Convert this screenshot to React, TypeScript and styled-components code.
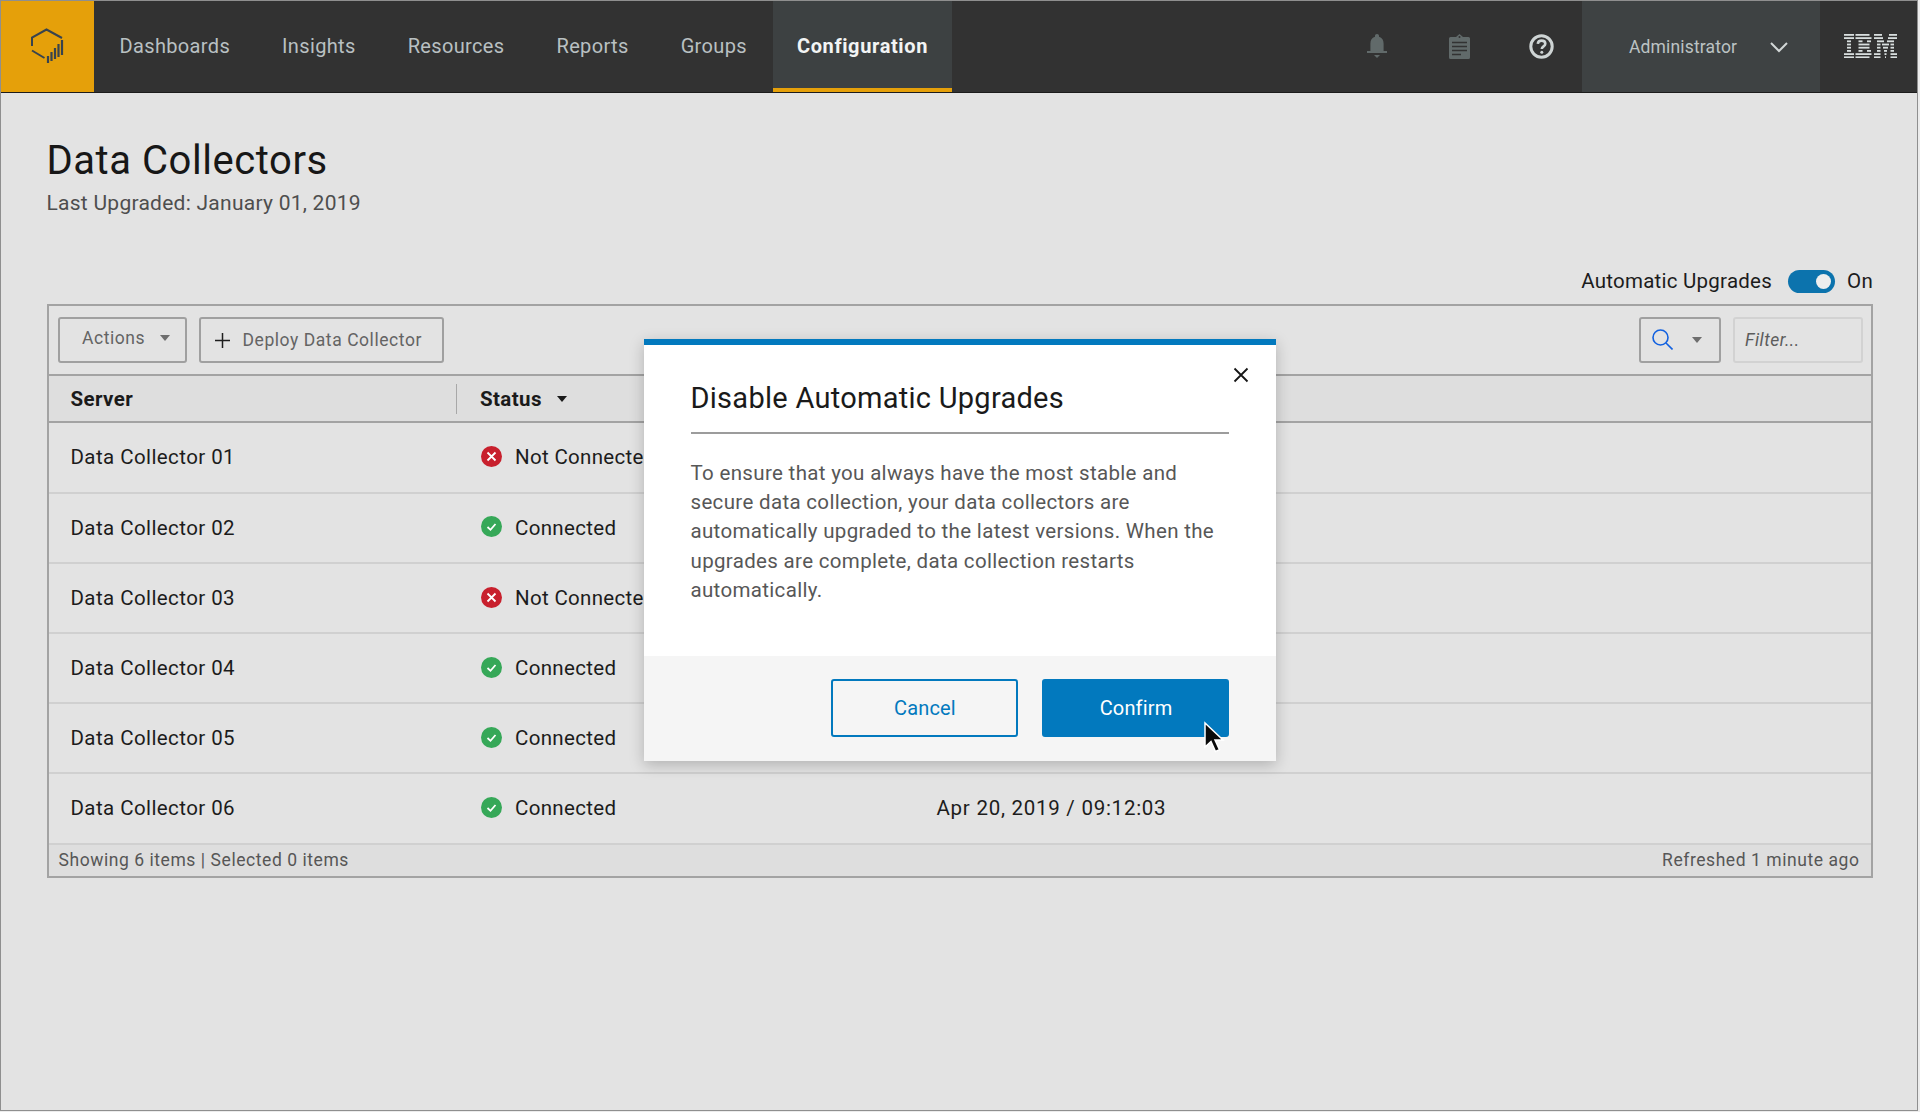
import styled, { createGlobalStyle } from 'styled-components';

const GlobalStyle = createGlobalStyle`
  html, body {
    margin: 0;
    padding: 0;
    background: #ececec;
  }
  body {
    font-family: Roboto, "Noto Sans", sans-serif;
    -webkit-font-smoothing: antialiased;
  }
  * {
    box-sizing: border-box;
  }
`;

const Frame = styled.div`
  position: relative;
  width: 1918px;
  height: 1111px;
  border: 1.5px solid #8f8f8f;
  background: #e3e3e3;
  overflow: hidden;
`;

const Header = styled.header`
  display: flex;
  align-items: stretch;
  height: 91.5px;
  background: #323232;
  border-bottom: 1px solid #1c1c1c;
`;

const LogoTile = styled.div`
  display: flex;
  align-items: center;
  justify-content: center;
  width: 92.5px;
  background: #e5a00a;
`;

const Nav = styled.nav`
  display: flex;
  align-items: stretch;
`;

const NavItem = styled.a<{ $active?: boolean }>`
  display: flex;
  align-items: center;
  padding: ${({ $active }) => ($active ? '0 24px' : '0 26px')};
  font-size: 20px;
  letter-spacing: ${({ $active }) => ($active ? '0.63px' : '0.35px')};
  font-weight: ${({ $active }) => ($active ? 700 : 400)};
  color: ${({ $active }) => ($active ? '#f2f4f4' : '#b9c0c2')};
  background: ${({ $active }) => ($active ? '#3d4142' : 'transparent')};
  border-bottom: 4px solid ${({ $active }) => ($active ? '#e5a00a' : 'transparent')};
  border-top: 4px solid transparent;
`;

const HeaderRight = styled.div`
  display: flex;
  align-items: stretch;
  margin-left: auto;
`;

const IconSlot = styled.div`
  display: flex;
  align-items: center;
  justify-content: center;
  width: 82px;
  padding-top: 1px;
`;

const IconGroup = styled.div`
  display: flex;
`;

const UserMenu = styled.div`
  display: flex;
  align-items: center;
  justify-content: space-between;
  width: 238px;
  padding: 2px 32px 0 47px;
  background: #3e4243;
  font-size: 17.5px;
  letter-spacing: 0.15px;
  color: #bcc3c4;
`;

const IbmSlot = styled.div`
  display: flex;
  align-items: center;
  justify-content: center;
  width: 97px;
  padding-left: 3px;
`;

const Main = styled.main`
  padding: 45px 44px 0 45.5px;
`;

const Title = styled.h1`
  margin: 0;
  font-size: 40px;
  line-height: 46px;
  font-weight: 400;
  letter-spacing: 0.55px;
  color: #171717;
`;

const Subtitle = styled.p`
  margin: 6.5px 0 0;
  font-size: 21px;
  line-height: 26px;
  letter-spacing: 0.26px;
  color: #4e4e4e;
`;

const UpgradeRow = styled.div`
  display: flex;
  align-items: center;
  justify-content: flex-end;
  gap: 16px;
  margin-top: 53px;
  height: 24px;
  font-size: 20.5px;
  letter-spacing: 0.25px;
  color: #1c1c1c;
`;

const OnLabel = styled.span`
  margin-left: -4px;
`;

const Toggle = styled.span`
  display: flex;
  align-items: center;
  justify-content: flex-end;
  width: 47px;
  height: 23px;
  padding-right: 4px;
  border-radius: 12px;
  background: #0c73ad;
`;

const Knob = styled.span`
  width: 15px;
  height: 15px;
  border-radius: 50%;
  background: #eeeeee;
`;

const Table = styled.section`
  margin-top: 10.5px;
  border: 2px solid #a3a3a3;
  width: 1826px;
`;

const Toolbar = styled.div`
  display: flex;
  align-items: center;
  height: 70.2px;
  padding: 0 8.5px 0 9.5px;
  gap: 12px;
  border-bottom: 2px solid #a3a3a3;
`;

const OutlineButton = styled.div`
  display: flex;
  align-items: center;
  height: 46px;
  border: 2px solid #a0a0a0;
  border-radius: 3px;
  font-size: 17.5px;
  letter-spacing: 0.56px;
  color: #646464;
`;

const ActionsButton = styled(OutlineButton)`
  width: 128.5px;
  padding: 0 0 3px 22px;
  gap: 15px;
`;

const DeployButton = styled(OutlineButton)`
  width: 245.5px;
  padding: 1px 0 0 14px;
  gap: 13px;
`;

const SearchButton = styled(OutlineButton)`
  width: 82px;
  margin-left: auto;
  padding-left: 11px;
  gap: 18.5px;
`;

const FilterBox = styled.div`
  display: flex;
  align-items: center;
  width: 130px;
  height: 46px;
  margin-right: -1px;
  padding-left: 10px;
  border: 2px solid #d2d2d2;
  border-radius: 3px;
  font-size: 17.5px;
  font-style: italic;
  letter-spacing: 0.5px;
  color: #5c5c5c;
`;

const Caret = styled.span<{ $dark?: boolean }>`
  display: inline-block;
  width: 0;
  height: 0;
  border-left: 5.5px solid transparent;
  border-right: 5.5px solid transparent;
  border-top: 6px solid ${({ $dark }) => ($dark ? '#1a1a1a' : '#6e6e6e')};
`;

const HeadRow = styled.div`
  display: grid;
  grid-template-columns: 407px 1fr;
  align-items: center;
  height: 47.7px;
  padding-top: 1px;
  background: #dedede;
  border-bottom: 2px solid #a3a3a3;
  font-size: 20.5px;
  font-weight: 700;
  letter-spacing: 0.4px;
  color: #1a1a1a;
`;

const HeadCell = styled.div<{ $divided?: boolean }>`
  display: flex;
  align-items: center;
  gap: 15px;
  height: 30px;
  padding-left: ${({ $divided }) => ($divided ? '23.5px' : '22px')};
  border-left: ${({ $divided }) => ($divided ? '1.5px solid #a8a8a8' : 'none')};
`;

const Row = styled.div`
  display: grid;
  grid-template-columns: 407px 459px 1fr;
  align-items: center;
  height: 70.2px;
  border-bottom: 2px solid #d0d0d0;
  font-size: 20.5px;
  letter-spacing: 0.42px;
  color: #1c1c1c;
`;

const ServerCell = styled.div`
  padding-left: 22px;
`;

const StatusCell = styled.div`
  display: flex;
  align-items: center;
  gap: 13px;
  padding-left: 25.5px;
  white-space: nowrap;
  letter-spacing: 0.32px;

  svg {
    margin-top: -1.5px;
  }
`;

const DateCell = styled.div`
  padding-left: 22px;
  white-space: nowrap;
  letter-spacing: 0.74px;
`;

const TableFooter = styled.div`
  display: flex;
  align-items: center;
  justify-content: space-between;
  height: 31.5px;
  padding: 0 11px 0 10px;
  background: #dedede;
  font-size: 17.5px;
  letter-spacing: 0.56px;
  color: #565656;
`;

const Modal = styled.div`
  position: absolute;
  top: 337.5px;
  left: 642.5px;
  display: flex;
  flex-direction: column;
  width: 632px;
  height: 422px;
  background: #ffffff;
  border-top: 6px solid #0279be;
  box-shadow: 0 4px 14px rgba(0, 0, 0, 0.22);
`;

const CloseButton = styled.div`
  position: absolute;
  top: 22px;
  right: 27px;
  display: flex;
  color: #161616;
`;

const ModalBody = styled.div`
  flex: 1;
  padding: 36px 47px 0;
`;

const ModalTitle = styled.h2`
  margin: 0;
  padding-bottom: 17.6px;
  font-size: 29px;
  line-height: 34px;
  font-weight: 400;
  letter-spacing: 0.27px;
  color: #1a1a1a;
  border-bottom: 2px solid #9c9c9c;
`;

const ModalText = styled.p`
  margin: 24.7px 0 0;
  font-size: 20.5px;
  line-height: 29.3px;
  letter-spacing: 0.33px;
  color: #575757;
`;

const ModalFooter = styled.div`
  display: flex;
  justify-content: flex-end;
  gap: 24px;
  height: 105px;
  padding: 23px 47px 0 0;
  background: #f5f5f5;
`;

const ModalButton = styled.div<{ $primary?: boolean }>`
  display: flex;
  align-items: center;
  justify-content: center;
  width: 187px;
  height: 58px;
  padding-left: 2px;
  border: 2px solid #0279be;
  border-radius: 3px;
  font-size: 20px;
  letter-spacing: 0.15px;
  color: ${({ $primary }) => ($primary ? '#ffffff' : '#0279be')};
  background: ${({ $primary }) => ($primary ? '#0279be' : 'transparent')};
`;

const Pointer = styled.svg`
  position: absolute;
  top: 720px;
  left: 1201px;
`;

const rows = [
  { name: 'Data Collector 01', ok: false },
  { name: 'Data Collector 02', ok: true },
  { name: 'Data Collector 03', ok: false },
  { name: 'Data Collector 04', ok: true },
  { name: 'Data Collector 05', ok: true },
  { name: 'Data Collector 06', ok: true, date: 'Apr 20, 2019 / 09:12:03' },
];

// x, width pairs for each stripe of the striped logo
const ibmStripes = [
  [0, 20, 23, 28, 60, 16, 90, 16],
  [0, 20, 23, 32, 60, 18, 88, 18],
  [6, 8, 29, 8, 46, 8, 66, 14, 86, 14],
  [6, 8, 29, 22, 66, 7, 76, 14, 93, 7],
  [6, 8, 29, 22, 66, 7, 78, 10, 93, 7],
  [6, 8, 29, 8, 46, 8, 66, 7, 80, 6, 93, 7],
  [0, 20, 23, 32, 60, 13, 81, 4, 93, 13],
  [0, 20, 23, 28, 60, 13, 82, 2, 93, 13],
];

function IbmLogo() {
  return (
    <svg width="53" height="24" viewBox="0 0 106 48" fill="#d8dede">
      {ibmStripes.map((stripe, i) =>
        stripe
          .filter((_, k) => k % 2 === 0)
          .map((x, k) => <rect key={`${i}-${k}`} x={x} y={i * 6.4} width={stripe[k * 2 + 1]} height="3.6" />),
      )}
    </svg>
  );
}

function ProductLogo() {
  return (
    <svg width="34" height="36" viewBox="0 0 34 36" fill="none" stroke="#38434e" strokeWidth="2">
      <path d="M2 18V9.500L16.500 1.500L32 10" />
      <path d="M2 22.500L14.500 30" />
      <path d="M18 35V28M21.500 33V24M25 31V20M28.500 29V16M32 27V12" strokeWidth="2.200" />
    </svg>
  );
}

function BellIcon() {
  return (
    <svg width="22" height="25" viewBox="0 0 22 25" fill="#616a6a">
      <path d="M11 0c1.300 0 2 .8 2 2v.7c3.200.9 4.600 3.600 4.600 7V17H21v2H1v-2h3.400V9.700c0-3.400 1.400-6.100 4.600-7V2c0-1.200.7-2 2-2z" />
      <path d="M8 21h6l-3 3z" />
    </svg>
  );
}

function ClipboardIcon() {
  return (
    <svg width="21" height="25" viewBox="0 0 21 25">
      <path
        fill="#616a6a"
        d="M1.500 3H7l3.500-3L14 3h5.500A1.500 1.500 0 0 1 21 4.500V23.500a1.500 1.500 0 0 1-1.500 1.500h-18A1.500 1.500 0 0 1 0 23.500V4.500A1.500 1.500 0 0 1 1.500 3z"
      />
      <path stroke="#323232" strokeWidth="1.600" d="M3 8.500h15M3 12.500h15M3 16.500h15M3 20.500h9" />
      <circle cx="10.500" cy="3" r="1" fill="#323232" />
    </svg>
  );
}

function HelpIcon() {
  return (
    <svg width="25" height="25" viewBox="0 0 25 25" fill="none">
      <circle cx="12.500" cy="12.500" r="10.700" stroke="#ced4d4" strokeWidth="3" />
      <path
        d="M8.800 9.800c.2-2 1.700-3.200 3.800-3.200s3.700 1.200 3.700 3.100c0 2.700-3.500 2.600-3.500 5.300"
        stroke="#ced4d4"
        strokeWidth="2.600"
      />
      <circle cx="12.800" cy="18.200" r="1.500" fill="#ced4d4" />
    </svg>
  );
}

function ChevronIcon() {
  return (
    <svg width="18" height="11" viewBox="0 0 18 11" fill="none" stroke="#d2d7d7" strokeWidth="2">
      <path d="M1 1l8 8 8-8" />
    </svg>
  );
}

function PlusIcon() {
  return (
    <svg width="15" height="15" viewBox="0 0 15 15" stroke="#1e1e1e" strokeWidth="1.500">
      <path d="M7.500 0v15M0 7.500h15" />
    </svg>
  );
}

function SearchIcon() {
  return (
    <svg width="21" height="21" viewBox="0 0 21 21" fill="none" stroke="#1261e0" strokeWidth="1.600">
      <circle cx="8.500" cy="8.500" r="7.500" />
      <path d="M14 14l6.500 6.500" />
    </svg>
  );
}

function StatusIcon({ ok }: { ok: boolean }) {
  return (
    <svg width="21" height="21" viewBox="0 0 21 21" fill="none" stroke="#ffffff" strokeWidth="1.800">
      <circle cx="10.500" cy="10.500" r="10.500" fill={ok ? '#36a858' : '#c8202d'} stroke="none" />
      {ok ? <path d="M6.500 11l3 2.800 5-5.800" /> : <path d="M6.500 6.500l8 8M14.500 6.500l-8 8" />}
    </svg>
  );
}

export default function App() {
  return (
    <>
      <GlobalStyle />
      <Frame>
        <Header>
          <LogoTile>
            <ProductLogo />
          </LogoTile>
          <Nav>
            <NavItem>Dashboards</NavItem>
            <NavItem>Insights</NavItem>
            <NavItem>Resources</NavItem>
            <NavItem>Reports</NavItem>
            <NavItem>Groups</NavItem>
            <NavItem $active>Configuration</NavItem>
          </Nav>
          <HeaderRight>
            <IconGroup>
              <IconSlot>
                <BellIcon />
              </IconSlot>
              <IconSlot>
                <ClipboardIcon />
              </IconSlot>
              <IconSlot>
                <HelpIcon />
              </IconSlot>
            </IconGroup>
            <UserMenu>
              Administrator
              <ChevronIcon />
            </UserMenu>
            <IbmSlot>
              <IbmLogo />
            </IbmSlot>
          </HeaderRight>
        </Header>

        <Main>
          <Title>Data Collectors</Title>
          <Subtitle>Last Upgraded: January 01, 2019</Subtitle>

          <UpgradeRow>
            Automatic Upgrades
            <Toggle>
              <Knob />
            </Toggle>
            <OnLabel>On</OnLabel>
          </UpgradeRow>

          <Table>
            <Toolbar>
              <ActionsButton>
                Actions
                <Caret />
              </ActionsButton>
              <DeployButton>
                <PlusIcon />
                Deploy Data Collector
              </DeployButton>
              <SearchButton>
                <SearchIcon />
                <Caret />
              </SearchButton>
              <FilterBox>Filter...</FilterBox>
            </Toolbar>
            <HeadRow>
              <HeadCell>Server</HeadCell>
              <HeadCell $divided>
                Status
                <Caret $dark />
              </HeadCell>
            </HeadRow>
            {rows.map((row) => (
              <Row key={row.name}>
                <ServerCell>{row.name}</ServerCell>
                <StatusCell>
                  <StatusIcon ok={row.ok} />
                  {row.ok ? 'Connected' : 'Not Connected'}
                </StatusCell>
                <DateCell>{row.date}</DateCell>
              </Row>
            ))}
            <TableFooter>
              <span>Showing 6 items | Selected 0 items</span>
              <span>Refreshed 1 minute ago</span>
            </TableFooter>
          </Table>
        </Main>

        <Modal>
          <CloseButton>
            <svg width="16" height="16" viewBox="0 0 16 16" stroke="currentColor" strokeWidth="1.800">
              <path d="M1.500 1.500l13 13M14.500 1.500l-13 13" />
            </svg>
          </CloseButton>
          <ModalBody>
            <ModalTitle>Disable Automatic Upgrades</ModalTitle>
            <ModalText>
              To ensure that you always have the most stable and secure data collection, your data
              collectors are automatically upgraded to the latest versions. When the upgrades are
              complete, data collection restarts automatically.
            </ModalText>
          </ModalBody>
          <ModalFooter>
            <ModalButton>Cancel</ModalButton>
            <ModalButton $primary>Confirm</ModalButton>
          </ModalFooter>
        </Modal>
        <Pointer width="24" height="34" viewBox="0 0 24 34">
          <path
            d="M3 2v24l6-5.500 4.500 10 4-1.800-4.500-9.700h8z"
            fill="#0a0a0a"
            stroke="#ffffff"
            strokeWidth="1.500"
          />
        </Pointer>
      </Frame>
    </>
  );
}
